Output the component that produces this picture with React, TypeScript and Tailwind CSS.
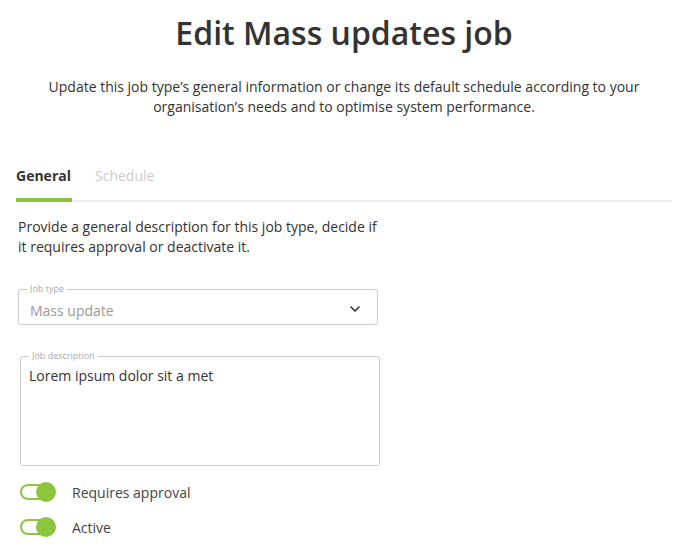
import React from 'react';
import { ChevronDown } from 'lucide-react';

const Toggle = ({ label }: { label: string }) => (
  <div className="flex items-center h-[20px]">
    <div className="relative w-[36px] h-[20px] ml-[20px]">
      <div className="absolute left-0 top-[2px] w-[34px] h-[16px] rounded-full border-2 border-[#8cc63f] bg-white" />
      <div className="absolute right-0 top-0 w-[20px] h-[20px] rounded-full bg-[#8cc63f]" />
    </div>
    <span className="ml-[16px] text-[14px] text-[#444]">{label}</span>
  </div>
);

const App = () => {
  return (
    <div className="min-h-screen bg-white font-['Open_Sans',sans-serif] text-[#333]">
      <div className="ml-[16px] mr-[11px] pt-[12px]">
        <h1 className="text-center text-[32px] font-semibold leading-[42px] text-[#333]">
          Edit Mass updates job
        </h1>
        <p className="mt-[23px] text-center text-[14px] leading-[20px] text-[#333] px-[30px]">
          Update this job type’s general information or change its default schedule according to your organisation’s needs and to optimise system performance.
        </p>

        <div className="mt-[49px] flex border-b-2 border-[#eee]">
          <div className="relative pb-[14px] w-[56px] text-[14px] font-bold text-[#333] leading-[20px]">
            General
            <div className="absolute left-0 right-0 -bottom-[2px] h-[4px] bg-[#8cc63f]" />
          </div>
          <div className="ml-[23px] text-[14px] text-[#ccc] leading-[20px]">Schedule</div>
        </div>

        <div className="w-[364px]">
          <p className="mt-[15px] pl-[2px] text-[14px] leading-[20px] text-[#333]">
            Provide a general description for this job type, decide if it requires approval or deactivate it.
          </p>

          <div className="relative mt-[32px] ml-[2px] w-[360px] h-[36px] rounded-[3px] border border-[#ccc] flex items-center justify-between pl-[11px] pr-[14px]">
            <span className="absolute -top-[7px] left-[8px] bg-white px-[3px] text-[9px] leading-[12px] text-[#aaa]">
              Job type
            </span>
            <span className="mt-[6px] text-[14px] text-[#999]">Mass update</span>
            <ChevronDown className="w-[16px] h-[16px] text-[#333] mt-[4px]" strokeWidth={2.5} />
          </div>

          <div className="relative mt-[31px] ml-[4px] w-[360px] h-[110px] rounded-[3px] border border-[#ccc] px-[8px] pt-[9px]">
            <span className="absolute -top-[7px] left-[8px] bg-white px-[3px] text-[9px] leading-[12px] text-[#aaa]">
              Job description
            </span>
            <div className="text-[14px] leading-[20px] text-[#333]">Lorem ipsum dolor sit a met</div>
          </div>
        </div>
      </div>

      <div className="mt-[16px] flex flex-col gap-[15px] pb-[20px]">
        <Toggle label="Requires approval" />
        <Toggle label="Active" />
      </div>
    </div>
  );
};

export default App;
